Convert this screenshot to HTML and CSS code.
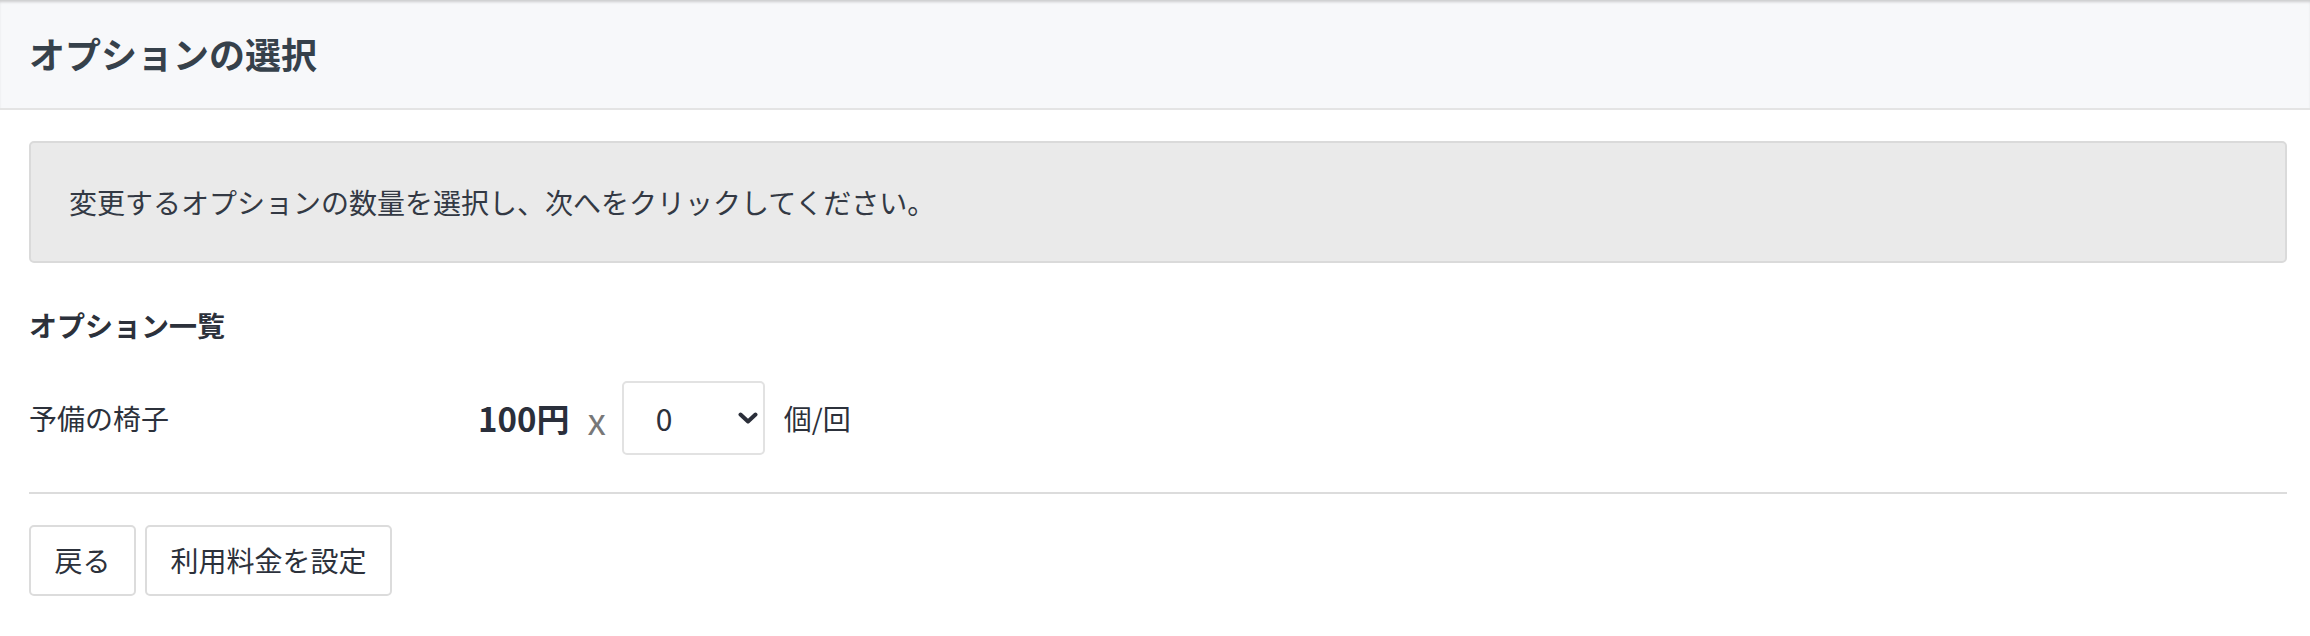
FILE: index.html
```html
<!DOCTYPE html>
<html lang="ja">
<head>
<meta charset="utf-8">
<title>オプションの選択</title>
<link rel="stylesheet" href="styles.css">
</head>
<body>
<header class="page-header">
  <h1 class="page-title">オプションの選択</h1>
</header>
<main class="content">
  <div class="notice">変更するオプションの数量を選択し、次へをクリックしてください。</div>
  <h2 class="section-title">オプション一覧</h2>
  <div class="option-row">
    <div class="option-name">予備の椅子</div>
    <div class="option-price">100円</div>
    <div class="option-times">x</div>
    <div class="select-wrap">
      <select class="qty-select">
        <option>0</option>
        <option>1</option>
        <option>2</option>
      </select>
      <svg class="select-arrow" width="20" height="12" viewBox="0 0 20 12" aria-hidden="true"><polyline points="2.5,2.5 10,9.5 17.5,2.5" fill="none" stroke="#2b2f3a" stroke-width="4" stroke-linecap="round" stroke-linejoin="round"/></svg>
    </div>
    <div class="option-unit">個/回</div>
  </div>
  <hr class="divider">
  <div class="actions">
    <button class="btn" type="button">戻る</button>
    <button class="btn" type="button">利用料金を設定</button>
  </div>
</main>
</body>
</html>
```
FILE: styles.css
```css
html, body {
  margin: 0;
  padding: 0;
  background: #ffffff;
}
body {
  font-family: "Noto Sans CJK JP", "Noto Sans", sans-serif;
  color: #2c313b;
  font-size: 28px;
}
.page-header {
  height: 108px;
  background: #f7f8fa;
  border-bottom: 2px solid #e4e4e4;
  box-shadow: inset 0 3px 3px -1px rgba(0, 0, 0, 0.18);
  display: flex;
  align-items: center;
  padding: 0 29px;
}
.page-title {
  margin: 0;
  font-size: 36px;
  font-weight: 700;
  color: #36414b;
  line-height: 1.2;
}
.content {
  padding: 0 23px 0 29px;
}
.notice {
  margin-top: 31px;
  height: 118px;
  box-sizing: content-box;
  background: #eaeaea;
  border: 2px solid #dadada;
  border-radius: 5px;
  padding: 0 38px;
  display: flex;
  align-items: center;
  font-size: 28px;
  color: #333944;
  line-height: 42px;
}
.section-title {
  margin: 41px 0 0;
  font-size: 28px;
  font-weight: 700;
  line-height: 42px;
  color: #2c313b;
}
.option-row {
  margin-top: 35px;
  display: flex;
  align-items: center;
  height: 74px;
}
.option-name {
  width: 449px;
  font-size: 28px;
  line-height: 42px;
}
.option-price {
  font-size: 33px;
  font-weight: 700;
  line-height: 42px;
  margin-right: 18px;
  color: #2a2f3b;
}
.option-times {
  font-size: 37px;
  line-height: 42px;
  color: #787878;
  margin-right: 16px;
  position: relative;
  top: 1px;
}
.select-wrap {
  position: relative;
  width: 143px;
  height: 74px;
  margin-right: 19px;
}
.qty-select {
  appearance: none;
  -webkit-appearance: none;
  width: 143px;
  height: 74px;
  box-sizing: border-box;
  border: 2px solid #e2e2e2;
  border-radius: 5px;
  background: #ffffff;
  padding: 0 0 0 32px;
  font-family: "Noto Sans CJK JP", "Noto Sans", sans-serif;
  font-size: 30px;
  color: #2c313b;
  margin: 0;
}
.select-arrow {
  position: absolute;
  right: 7px;
  top: 31px;
  pointer-events: none;
}
.option-unit {
  font-size: 28px;
  line-height: 42px;
}
.divider {
  margin: 37px 0 0;
  border: 0;
  border-top: 2px solid #dcdcdc;
  height: 0;
}
.actions {
  margin-top: 31px;
  display: flex;
  gap: 9px;
}
.btn {
  font-family: "Noto Sans CJK JP", "Noto Sans", sans-serif;
  font-size: 28px;
  line-height: 43px;
  padding: 12px 23.5px;
  border: 2px solid #dcdcdc;
  border-radius: 5px;
  background: #ffffff;
  color: #2c313b;
  margin: 0;
}
```
